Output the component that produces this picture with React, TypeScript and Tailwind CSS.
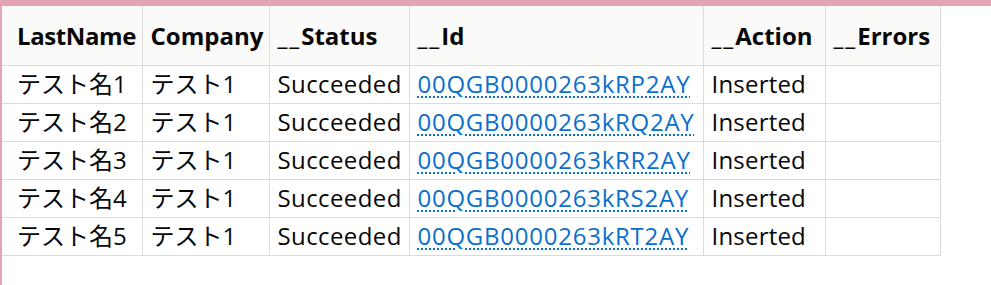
import React from "react";

const rows = [
  { lastName: "テスト名1", company: "テスト1", status: "Succeeded", id: "00QGB0000263kRP2AY", action: "Inserted", errors: "" },
  { lastName: "テスト名2", company: "テスト1", status: "Succeeded", id: "00QGB0000263kRQ2AY", action: "Inserted", errors: "" },
  { lastName: "テスト名3", company: "テスト1", status: "Succeeded", id: "00QGB0000263kRR2AY", action: "Inserted", errors: "" },
  { lastName: "テスト名4", company: "テスト1", status: "Succeeded", id: "00QGB0000263kRS2AY", action: "Inserted", errors: "" },
  { lastName: "テスト名5", company: "テスト1", status: "Succeeded", id: "00QGB0000263kRT2AY", action: "Inserted", errors: "" },
];

const headers = ["LastName", "Company", "__Status", "__Id", "__Action", "__Errors"];
const widths = ["w-[140px]", "w-[127px]", "w-[140px]", "w-[294px]", "w-[122px]", "w-[115px]"];

function HeaderLabel({ text }: { text: string }) {
  // underscores in the original font are a bit wider
  if (text.startsWith("__")) {
    return (
      <>
        <span className="tracking-[2px]">__</span>
        {text.slice(2)}
      </>
    );
  }
  return <>{text}</>;
}

export default function App() {
  return (
    <div
      className="h-[285px] w-[991px] overflow-hidden border-t-[6px] border-l-[2px] border-[#e3a5b4] bg-white text-[24px] text-[#080707]"
      style={{ fontFamily: '"Open Sans", "Noto Sans CJK JP", sans-serif' }}
    >
      <table className="w-[938px] table-fixed border-collapse">
        <colgroup>
          {widths.map((w, i) => (
            <col key={i} className={w} />
          ))}
        </colgroup>
        <thead>
          <tr className="h-[59px] bg-[#fafaf9]">
            {headers.map((h, i) => (
              <th
                key={h}
                className={`border border-[#dddbda] border-t-0 pt-[2px] text-left font-bold align-middle whitespace-nowrap ${
                  i === 0 ? "border-l-0 pl-[15px] pr-0 tracking-[-0.4px]" : "px-2"
                }`}
              >
                <HeaderLabel text={h} />
              </th>
            ))}
          </tr>
        </thead>
        <tbody>
          {rows.map((r) => (
            <tr key={r.id} className="h-[38px]">
              <td className="border border-l-0 border-[#dddbda] pl-[15px] pr-0 align-middle whitespace-nowrap leading-none">{r.lastName}</td>
              <td className="border border-[#dddbda] px-2 align-middle whitespace-nowrap leading-none">{r.company}</td>
              <td className="border border-[#dddbda] px-2 align-middle whitespace-nowrap leading-none tracking-[0.4px]">{r.status}</td>
              <td className="border border-[#dddbda] px-2 align-middle whitespace-nowrap leading-none">
                <a
                  href="#"
                  className="text-[#0b6fcc] tracking-[0.75px] underline decoration-dotted decoration-[2px] underline-offset-[3px]"
                >
                  {r.id}
                </a>
              </td>
              <td className="border border-[#dddbda] px-2 align-middle whitespace-nowrap leading-none tracking-[0.2px]">{r.action}</td>
              <td className="border border-[#dddbda] px-2 align-middle whitespace-nowrap leading-none">{r.errors}</td>
            </tr>
          ))}
        </tbody>
      </table>
    </div>
  );
}
